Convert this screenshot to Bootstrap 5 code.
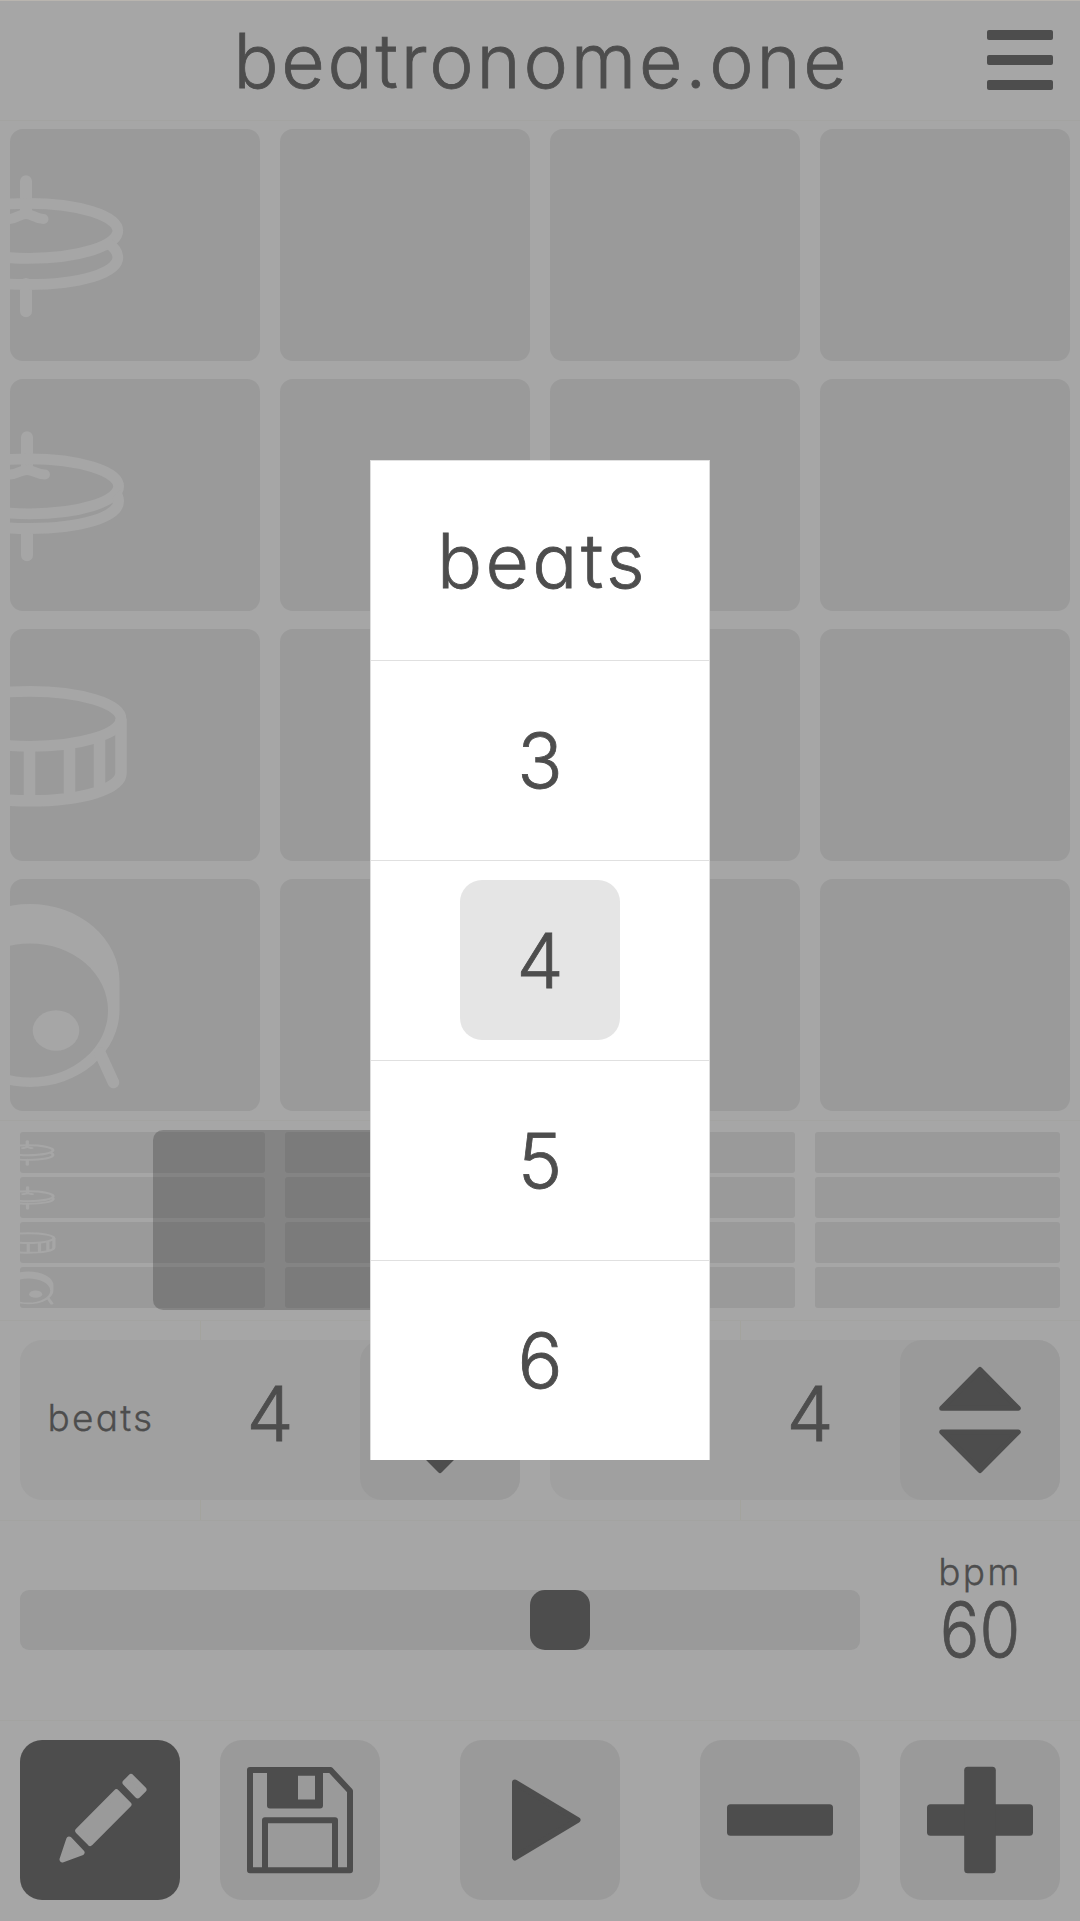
<!DOCTYPE html>
<html lang="en">
<head>
<meta charset="utf-8">
<meta name="viewport" content="width=device-width, initial-scale=1">
<title>beatronome.one</title>
<link rel="stylesheet" href="https://cdn.jsdelivr.net/npm/bootstrap@5.3.0/dist/css/bootstrap.min.css">
<style>
  :root { --ink:#4d4d4d; --bg:#a6a6a6; --tile:#9a9a9a; --panel:#a0a0a0; }
  body { background:var(--bg); color:var(--ink); font-family:Inter, Lato, sans-serif; font-weight:300; font-feature-settings:"cv11"; line-height:1; }
  .app { width:1080px; height:1921px; border-top:1px solid #b9b5af; }
  .big { font-size:75px; -webkit-text-stroke:.8px var(--ink); }
  .tiny { font-size:37px; letter-spacing:2.2px; -webkit-text-stroke:.3px var(--ink); }
  .app-head { height:119px; padding-right:27px; }
  .brand { letter-spacing:2.8px; padding-left:96px; }
  .menu-btn { width:66px; height:60px; margin-top:-2px; }
  .menu-btn i { height:10px; border-radius:2px; background:var(--ink); }
  .rule { border-top:1px solid #a3a3a1; }
  .pads { height:1000px; padding:7.7px 10px 8.7px; gap:17.3px; }
  .pads > div { gap:20px; min-height:0; }
  .pad { background:var(--tile); border-radius:13px; }
  .glyph { fill:none; stroke:var(--bg); }
  .overview { height:200px; padding:10.7px 20px 11.3px; gap:3.3px; }
  .overview > .lane { gap:20px; height:41.7px; }
  .bar { background:var(--tile); border-radius:3px; }
  .view { left:153px; top:9px; width:387px; height:180px; border-radius:10px; background:rgba(0,0,0,.2); }
  .counts { height:200px; padding:19px 20px 20px; background:linear-gradient(#a3a39d,#a3a39d) 200px 0/1px 100% no-repeat, linear-gradient(#a3a39d,#a3a39d) 740px 0/1px 100% no-repeat; }
  .count { background:var(--panel); border-radius:22px; height:160px; }
  .count .tiny { padding-bottom:5px; }
  .count .big { padding-bottom:13px; padding-right:2px; }
  .tool { width:160px; height:160px; border-radius:22px; background:var(--tile); border:0; padding:0; color:var(--ink); }
  .tool.on { background:var(--ink); color:var(--tile); }
  .tool svg, .pad svg, .bar svg { display:block; width:100%; height:100%; }
  .tempo { height:200px; padding:0 20px 1px; }
  .track { width:840px; height:60px; border-radius:9px; background:var(--tile); }
  .thumb { width:60px; height:60px; border-radius:15px; background:var(--ink); }
  .readout { width:160px; padding-bottom:20px; }
  .bpm { padding-bottom:2px; }
  .bpm-num { transform:scaleX(.88); }
  .tools { height:200px; padding:19px 20px 20px; }
  .picker { left:370px; top:460px; width:340px; height:1000px; background:#fff; border-left:1px solid #ddd; border-right:1px solid #ddd; }
  .picker > div { height:200px; border-top:1px solid #e0e0e0; padding-bottom:1px; }
  .word { letter-spacing:3.4px; padding-left:5px; }
  .pick { width:160px; height:160px; border-radius:22px; }
  .pick.on { background:#e5e5e5; }
</style>
<script src="https://cdn.jsdelivr.net/npm/bootstrap@5.3.0/dist/js/bootstrap.bundle.min.js"></script>
</head>
<body>
<svg width="0" height="0" class="position-absolute">
  <defs>
    <g id="hat-open">
      <path stroke-width="12" stroke-linecap="round" d="M26 52.3V82M26 155V182.3"/>
      <ellipse cx="28.800" cy="101.8" rx="89" ry="27.5" stroke-width="10.8"/>
      <path stroke-width="10.8" d="M109 115C115 119 117.800 123.500 117.800 128.500C117.800 144 80 155.500 28 155.500S-61 144-61 128.500C-61 123.500-59 119-53 115"/>
      <path stroke-width="10" stroke-linecap="round" d="M8.500 90C17 90 19 85 26 85S35 90 43.500 90"/>
      <path stroke-width="12" d="M26 75V84"/>
    </g>
    <g id="hat-closed">
      <path stroke-width="12" stroke-linecap="round" d="M27 58.300V90M27 150V176.300"/>
      <ellipse cx="29.600" cy="107.300" rx="89" ry="27.500" stroke-width="10.800"/>
      <path stroke-width="10.800" d="M116 115C118 117 118.600 119.500 118.600 122.300C118.600 138 81 149.500 29 149.500S-60 138-60 122.300C-60 119.500-59.500 117-58 115"/>
      <path stroke-width="10" stroke-linecap="round" d="M9.500 95.500C18 95.500 20 91 27 91S36 95.500 45 95.500"/>
    </g>
    <g id="snare">
      <ellipse cx="30" cy="89.800" rx="91" ry="27.500" stroke-width="10.800"/>
      <path stroke-width="11.500" d="M121 89.800V144C121 160 82 171.800 30 171.800S-61 160-61 144V89.800M29.500 119V170M69.500 116V167M99.500 110V162M-10.500 116V167M-40.500 110V162" />
    </g>
    <g id="kick">
      <path fill="#a6a6a6" fill-rule="evenodd" stroke="none" d="M-60 102A89.750 77 0 0 1 119.500 102V131A89.750 77 0 0 1-60 131ZM-48 131.500A78 67 0 0 0 108 131.500A78 67 0 0 0-48 131.500Z"/>
      <ellipse cx="56" cy="151.500" rx="23.300" ry="20.300" fill="#a6a6a6" stroke="none"/>
      <path stroke-width="11.500" stroke-linecap="round" d="M100 174L113.500 203.500M-40 174L-53.500 203.500"/>
    </g>
  </defs>
</svg>

<div class="app d-flex flex-column position-relative overflow-hidden">
  <header class="app-head d-flex align-items-center">
    <div class="brand big flex-fill text-center text-nowrap">beatronome.one</div>
    <div class="menu-btn d-flex flex-column justify-content-between"><i></i><i></i><i></i></div>
  </header>

  <section class="pads rule d-flex flex-column">
    <div class="d-flex flex-fill"><div class="pad flex-fill w-25 overflow-hidden"><svg class="glyph" viewBox="10 0 250 232.700" preserveAspectRatio="none"><use href="#hat-open"/></svg></div><div class="pad flex-fill w-25"></div><div class="pad flex-fill w-25"></div><div class="pad flex-fill w-25"></div></div>
    <div class="d-flex flex-fill"><div class="pad flex-fill w-25 overflow-hidden"><svg class="glyph" viewBox="10 0 250 232.700" preserveAspectRatio="none"><use href="#hat-closed"/></svg></div><div class="pad flex-fill w-25"></div><div class="pad flex-fill w-25"></div><div class="pad flex-fill w-25"></div></div>
    <div class="d-flex flex-fill"><div class="pad flex-fill w-25 overflow-hidden"><svg class="glyph" viewBox="10 0 250 232.700" preserveAspectRatio="none"><use href="#snare"/></svg></div><div class="pad flex-fill w-25"></div><div class="pad flex-fill w-25"></div><div class="pad flex-fill w-25"></div></div>
    <div class="d-flex flex-fill"><div class="pad flex-fill w-25 overflow-hidden"><svg class="glyph" viewBox="10 0 250 232.700" preserveAspectRatio="none"><use href="#kick"/></svg></div><div class="pad flex-fill w-25"></div><div class="pad flex-fill w-25"></div><div class="pad flex-fill w-25"></div></div>
  </section>

  <section class="overview rule d-flex flex-column position-relative">
    <div class="lane d-flex"><div class="bar flex-fill w-25 overflow-hidden"><svg class="glyph" viewBox="0 0 875 232.700" preserveAspectRatio="none"><use href="#hat-open"/></svg></div><div class="bar flex-fill w-25"></div><div class="bar flex-fill w-25"></div><div class="bar flex-fill w-25"></div></div>
    <div class="lane d-flex"><div class="bar flex-fill w-25 overflow-hidden"><svg class="glyph" viewBox="0 0 875 232.700" preserveAspectRatio="none"><use href="#hat-closed"/></svg></div><div class="bar flex-fill w-25"></div><div class="bar flex-fill w-25"></div><div class="bar flex-fill w-25"></div></div>
    <div class="lane d-flex"><div class="bar flex-fill w-25 overflow-hidden"><svg class="glyph" viewBox="0 0 875 232.700" preserveAspectRatio="none"><use href="#snare"/></svg></div><div class="bar flex-fill w-25"></div><div class="bar flex-fill w-25"></div><div class="bar flex-fill w-25"></div></div>
    <div class="lane d-flex"><div class="bar flex-fill w-25 overflow-hidden"><svg class="glyph" viewBox="0 0 875 232.700" preserveAspectRatio="none"><use href="#kick"/></svg></div><div class="bar flex-fill w-25"></div><div class="bar flex-fill w-25"></div><div class="bar flex-fill w-25"></div></div>
    <div class="view position-absolute"></div>
  </section>

  <section class="counts rule d-flex justify-content-between">
    <div class="count d-flex align-items-center" style="width:500px">
      <span class="tiny text-center" style="width:162px">beats</span>
      <span class="big text-center flex-fill">4</span>
      <button class="tool" aria-label="change beats"><svg viewBox="0 0 160 160" fill="currentColor" stroke="currentColor" stroke-width="5" stroke-linejoin="round"><path d="M80 29.500L118.300 68.300H41.700ZM80 130.500L118.300 92H41.700Z"/></svg></button>
    </div>
    <div class="count d-flex align-items-center" style="width:510px">
      <span style="width:172px"></span>
      <span class="big text-center flex-fill">4</span>
      <button class="tool" aria-label="change division"><svg viewBox="0 0 160 160" fill="currentColor" stroke="currentColor" stroke-width="5" stroke-linejoin="round"><path d="M80 29.500L118.300 68.300H41.700ZM80 130.500L118.300 92H41.700Z"/></svg></button>
    </div>
  </section>

  <section class="tempo rule d-flex justify-content-between align-items-center">
    <div class="track d-flex justify-content-center"><div class="thumb" style="margin-left:240px"></div></div>
    <div class="readout text-center"><div class="tiny bpm">bpm</div><div class="big bpm-num">60</div></div>
  </section>

  <section class="tools rule d-flex justify-content-between">
    <div class="d-flex" style="gap:40px">
      <button class="tool on" aria-label="edit"><svg viewBox="0 0 160 160" fill="currentColor" stroke="currentColor" stroke-width="6" stroke-linejoin="round"><path d="M111 37L123.500 49.700L117.700 55.300L105.500 42.700ZM96.400 52.300L108.500 64.500L70.200 103L58.200 90.800ZM49.200 99.500L61.500 112.500L42.500 119.500Z"/></svg></button>
      <button class="tool" aria-label="save"><svg viewBox="0 0 160 160" fill="none" stroke="currentColor" stroke-width="6" stroke-linejoin="round"><path d="M30 30H110.500L130 51V130.300H30ZM45 130V80.200H115V130"/><path fill="currentColor" stroke="none" fill-rule="evenodd" d="M47 27.500H103V65.500a3 3 0 0 1-3 3H50a3 3 0 0 1-3-3ZM78 35.700V59.500H95V35.700Z"/></svg></button>
    </div>
    <button class="tool" aria-label="play"><svg viewBox="0 0 160 160" fill="currentColor" stroke="currentColor" stroke-width="6" stroke-linejoin="round"><path d="M55 42.500L117.500 80L55 117.500Z"/></svg></button>
    <div class="d-flex" style="gap:40px">
      <button class="tool" aria-label="slower"><svg viewBox="0 0 160 160" fill="currentColor"><rect x="27" y="64.200" width="106" height="31.500" rx="3.500"/></svg></button>
      <button class="tool" aria-label="faster"><svg viewBox="0 0 160 160" fill="currentColor"><rect x="27" y="64.200" width="106" height="31.500" rx="3.500"/><rect x="64.200" y="26.800" width="31.600" height="106.500" rx="3.500"/></svg></button>
    </div>
  </section>
</div>

<div class="picker position-absolute">
  <div class="d-flex align-items-center justify-content-center"><span class="big word">beats</span></div>
  <div class="d-flex align-items-center justify-content-center"><span class="big">3</span></div>
  <div class="d-flex align-items-center justify-content-center"><div class="pick on d-flex align-items-center justify-content-center"><span class="big">4</span></div></div>
  <div class="d-flex align-items-center justify-content-center"><span class="big">5</span></div>
  <div class="d-flex align-items-center justify-content-center"><span class="big">6</span></div>
</div>
</body>
</html>
